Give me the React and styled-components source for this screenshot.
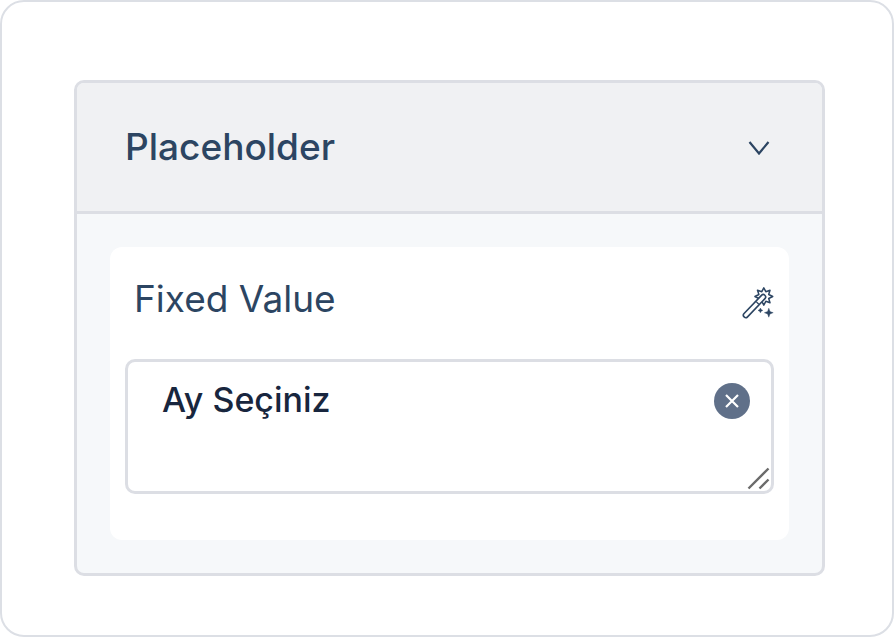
import { useId, useState } from 'react';
import styled, { createGlobalStyle } from 'styled-components';

const GlobalStyle = createGlobalStyle`
  * {
    box-sizing: border-box;
  }
  body {
    margin: 0;
    background: #fff;
    font-family: Inter, 'Liberation Sans', sans-serif;
  }
`;

const Frame = styled.main`
  min-height: 100vh;
  padding: 78px 67px 59px 72px;
  border: 2px solid #dcdfe5;
  border-radius: 24px;
`;

const Panel = styled.section`
  overflow: hidden;
  border: 3px solid #dcdee4;
  border-radius: 10px;
  background: #f6f8fa;
`;

const PanelHeader = styled.button`
  display: flex;
  align-items: center;
  justify-content: space-between;
  width: 100%;
  height: 131px;
  padding: 0 52px 0 48px;
  border: 0;
  border-bottom: 3px solid #dcdee4;
  background: #f0f1f3;
  color: #2c4562;
  font-family: inherit;
  font-size: 37px;
  font-weight: 500;
  line-height: 44px;
  cursor: pointer;
`;

const PanelBody = styled.div`
  padding: 33px;
`;

const Card = styled.div`
  padding: 30px 15px 46px;
  border-radius: 12px;
  background: #fff;
`;

const FieldHeader = styled.div`
  display: flex;
  align-items: center;
  justify-content: space-between;
  margin-bottom: 38px;
  padding-left: 9px;
`;

const FieldLabel = styled.label`
  color: #2c4562;
  font-size: 37px;
  line-height: 44px;
`;

const IconButton = styled.button`
  display: flex;
  padding: 8px 0 0;
  border: 0;
  background: none;
  color: #2c4562;
  cursor: pointer;
`;

const TextBox = styled.div`
  position: relative;
`;

const TextArea = styled.textarea`
  display: block;
  width: 100%;
  height: 135px;
  padding: 16px 64px 16px 34px;
  border: 3px solid #dcdee4;
  border-radius: 10px;
  outline: none;
  background: #fff;
  color: #18263e;
  font-family: inherit;
  font-size: 34px;
  font-weight: 500;
  line-height: 44px;
  resize: none;
`;

const ClearButton = styled.button`
  position: absolute;
  top: 24px;
  right: 24px;
  display: flex;
  align-items: center;
  justify-content: center;
  width: 36px;
  height: 36px;
  padding: 0;
  border: 0;
  border-radius: 50%;
  background: #607089;
  color: #fff;
  cursor: pointer;
`;

const Grip = styled.svg`
  position: absolute;
  right: 4px;
  bottom: 4px;
  pointer-events: none;
`;

const ChevronIcon = () => (
  <svg width="22" height="16" viewBox="0 0 22 16" fill="none" aria-hidden="true">
    <path d="M1.5 3 11 14.5 20.5 3" stroke="currentColor" strokeWidth="2.2" />
  </svg>
);

const WandIcon = () => (
  <svg
    width="32"
    height="32"
    viewBox="0 0 32 32"
    fill="none"
    stroke="currentColor"
    strokeWidth="1.5"
    strokeLinejoin="round"
    aria-hidden="true"
  >
    <path d="m21.8.9 2 3.8 4.2-1.4-1.3 4.2 4 2-4 2 1.3 4.2-4.2-1.4-2 3.8-2-3.8-4.3 1.4 1.4-4.2-4-2 4-2-1.4-4.2 4.3 1.4z" />
    {/* stick, outlined over the star */}
    <path d="M3.8 28.2 21.2 10" strokeWidth="6.4" strokeLinecap="round" />
    <path d="M3.8 28.2 21.2 10" stroke="#fff" strokeWidth="3.2" strokeLinecap="round" />
    <path d="m14.2 14.6 2.6 2.6" strokeWidth="1.3" />
    <path
      d="m26.8 21.2 1.2 3.3 3.2 1.2-3.2 1.2-1.2 3.3-1.2-3.3-3.2-1.2 3.2-1.2z"
      fill="currentColor"
      strokeWidth=".4"
    />
    <path
      d="m18.4 21 .8 1.6 1.6.8-1.6.8-.8 1.6-.8-1.6-1.6-.8 1.6-.8z"
      fill="currentColor"
      strokeWidth=".4"
    />
  </svg>
);

const CloseIcon = () => (
  <svg width="14" height="14" viewBox="0 0 14 14" fill="none" aria-hidden="true">
    <path d="m1 1 12 12M13 1 1 13" stroke="currentColor" strokeWidth="2.2" />
  </svg>
);

const App = () => {
  const [open, setOpen] = useState(true);
  const [value, setValue] = useState('Ay Seçiniz');
  const fieldId = useId();

  return (
    <>
      <GlobalStyle />
      <Frame>
        <Panel>
          <PanelHeader
            type="button"
            aria-expanded={open}
            onClick={() => setOpen(!open)}
          >
            Placeholder
            <ChevronIcon />
          </PanelHeader>
          {open && (
            <PanelBody>
              <Card>
                <FieldHeader>
                  <FieldLabel htmlFor={fieldId}>Fixed Value</FieldLabel>
                  <IconButton type="button">
                    <WandIcon />
                  </IconButton>
                </FieldHeader>
                <TextBox>
                  <TextArea
                    id={fieldId}
                    value={value}
                    spellCheck={false}
                    onChange={(e) => setValue(e.target.value)}
                  />
                  <ClearButton type="button" onClick={() => setValue('')}>
                    <CloseIcon />
                  </ClearButton>
                  <Grip width="23" height="23" viewBox="0 0 23 23" aria-hidden="true">
                    <path
                      d="M1.5 21.5 21.5 1.5M12.5 21.5l9-9"
                      stroke="#6b6b6b"
                      strokeWidth="2.4"
                    />
                  </Grip>
                </TextBox>
              </Card>
            </PanelBody>
          )}
        </Panel>
      </Frame>
    </>
  );
};

export default App;
